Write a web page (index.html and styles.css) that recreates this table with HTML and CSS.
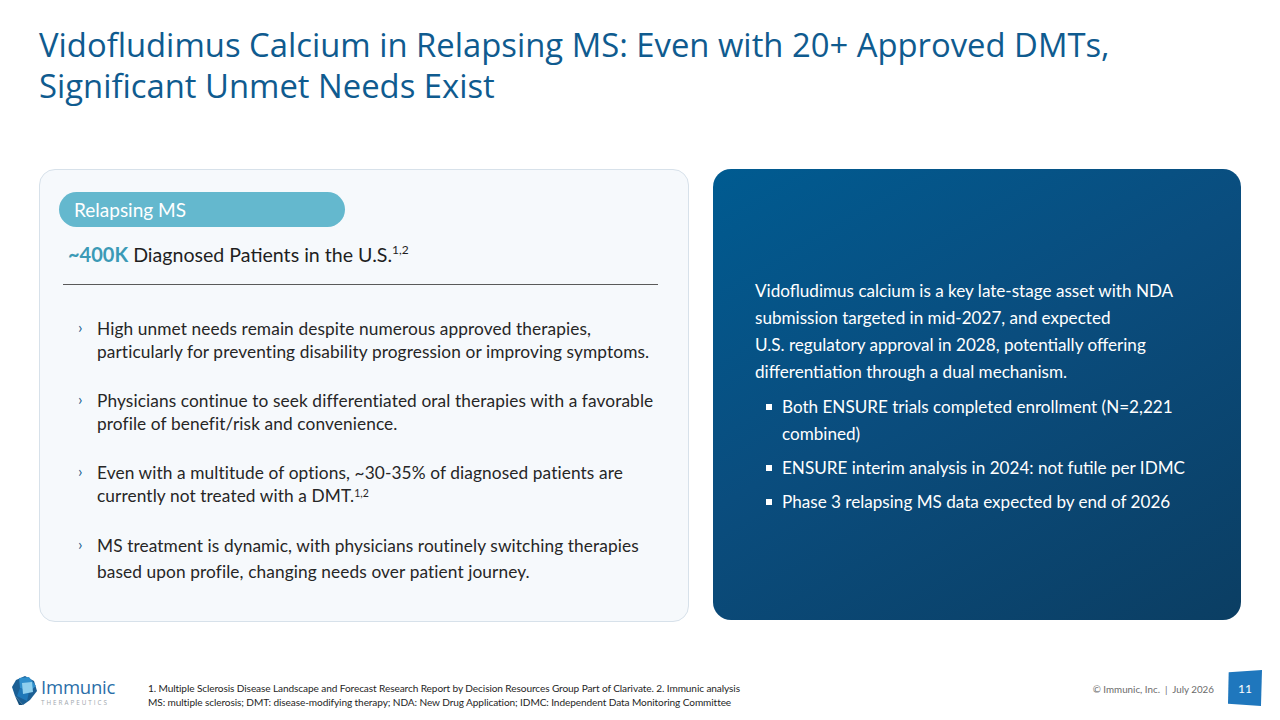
FILE: index.html
```html
<!DOCTYPE html>
<html>
<head>
<meta charset="utf-8">
<link rel="stylesheet" href="styles.css">
</head>
<body>
<div class="slide">
  <h1 class="title">Vidofludimus Calcium in Relapsing MS: Even with 20+ Approved DMTs,<br>Significant Unmet Needs Exist</h1>

  <div class="content">
    <div class="card-left">
      <div class="pill">Relapsing MS</div>
      <div class="stat"><span class="stat-num">~400K</span> Diagnosed Patients in the U.S.<sup>1,2</sup></div>
      <div class="rule"></div>
      <ul class="chev-list">
        <li>High unmet needs remain despite numerous approved therapies, particularly for preventing disability progression or improving symptoms.</li>
        <li>Physicians continue to seek differentiated oral therapies with a favorable profile of benefit/risk and convenience.</li>
        <li>Even with a multitude of options, ~30-35% of diagnosed patients are currently not treated with a DMT.<sup>1,2</sup></li>
        <li class="loose">MS treatment is dynamic, with physicians routinely switching therapies based upon profile, changing needs over patient journey.</li>
      </ul>
    </div>

    <div class="card-right">
      <div class="right-inner">
        <p class="lead">Vidofludimus calcium is a key late-stage asset with NDA submission targeted in mid-2027, and expected<br>U.S. regulatory approval in 2028, potentially offering differentiation through a dual mechanism.</p>
        <ul class="sq-list">
          <li>Both ENSURE trials completed enrollment (N=2,221 combined)</li>
          <li>ENSURE interim analysis in 2024: not futile per IDMC</li>
          <li>Phase 3 relapsing MS data expected by end of 2026</li>
        </ul>
      </div>
    </div>
  </div>

  <div class="footer">
    <div class="logo">
      <svg class="logo-mark" width="26" height="30" viewBox="0 0 26 30">
        <polygon points="4,4 13,0 22,5 25,15 18,24 11,29 3,20 0,11" fill="#1b5f94"/>
        <polygon points="7,2 17,1 24,10 17,16 8,12" fill="#2f8fcc"/>
        <polygon points="8,12 17,16 15,25 5,20" fill="#1f78b8"/>
        <polygon points="10,7 20,6 21,16 11,18" fill="#8fd0ee"/>
        <polygon points="3,20 11,29 7,29" fill="#144f7c"/>
      </svg>
      <div class="logo-text">
        <div class="logo-name">Immunic</div>
        <div class="logo-sub">THERAPEUTICS</div>
      </div>
    </div>
    <div class="footnotes">
      <div>1. Multiple Sclerosis Disease Landscape and Forecast Research Report by Decision Resources Group Part of Clarivate. 2. Immunic analysis</div>
      <div>MS: multiple sclerosis; DMT: disease-modifying therapy; NDA: New Drug Application; IDMC: Independent Data Monitoring Committee</div>
    </div>
    <div class="copyright">© Immunic, Inc. &nbsp;|&nbsp; July 2026</div>
    <div class="page-badge">11</div>
  </div>
</div>
</body>
</html>
```
FILE: styles.css
```css
* { box-sizing: border-box; }
html, body { margin: 0; padding: 0; }
body {
  width: 1280px;
  height: 720px;
  background: #ffffff;
  font-family: "Lato", "Open Sans", sans-serif;
  overflow: hidden;
}
.slide {
  width: 1280px;
  height: 720px;
  display: flex;
  flex-direction: column;
}
.title {
  margin: 24px 0 0 39px;
  font-family: "Open Sans", sans-serif;
  font-weight: 400;
  font-size: 32.8px;
  line-height: 41px;
  color: #0f5b8f;
  letter-spacing: 0;
}
.content {
  display: flex;
  margin: 63px 0 0 39px;
  gap: 24px;
  height: 453px;
}
.card-left {
  width: 650px;
  height: 453px;
  background: #f6f9fc;
  border: 1px solid #d7e1ea;
  border-radius: 16px;
  padding: 22px 31px 0 19px;
}
.pill {
  width: 286px;
  height: 35px;
  border-radius: 18px;
  background: #64b8ce;
  color: #fff;
  font-size: 19px;
  line-height: 35px;
  padding-left: 15px;
}
.stat {
  margin: 14px 0 0 9px;
  font-size: 19.6px;
  color: #1f1f1f;
  line-height: 27px;
}
.stat-num {
  color: #3b9ab6;
  font-weight: 700;
  font-size: 20px;
}
.stat sup {
  font-size: 12px;
  line-height: 0;
}
.chev-list sup {
  font-size: 10.5px;
  line-height: 0;
  vertical-align: 5px;
}
.rule {
  margin: 16px 0 0 4px;
  height: 1px;
  background: #5a5a5a;
  width: 595px;
}
.chev-list {
  list-style: none;
  margin: 32px 0 0 0;
  padding: 0 0 0 38px;
  font-size: 17.3px;
  line-height: 23px;
  color: #262626;
  letter-spacing: 0.1px;
}
.chev-list li {
  position: relative;
  margin-bottom: 26px;
  width: 562px;
}
.chev-list li::before {
  content: "›";
  position: absolute;
  left: -19px;
  top: -2px;
  color: #1a5f8f;
  font-size: 16px;
}
.chev-list li.loose { line-height: 26px; }
.card-right {
  width: 528px;
  height: 451px;
  border-radius: 18px;
  background: linear-gradient(150deg, #005b91 0%, #0a4d7e 45%, #0b3e63 100%);
  display: flex;
  align-items: center;
  padding: 0 40px 0 42px;
}
.right-inner {
  color: #ffffff;
  font-size: 17.1px;
  margin-top: 10px;
}
.lead {
  margin: 0;
  line-height: 27px;
}
.sq-list {
  list-style: none;
  margin: 8px 0 0 0;
  padding: 0 0 0 27px;
  line-height: 27px;
}
.sq-list li {
  position: relative;
  margin-bottom: 7px;
}
.sq-list li::before {
  content: "";
  position: absolute;
  left: -16px;
  top: 11px;
  width: 6px;
  height: 6px;
  background: #ffffff;
}
.footer {
  margin-top: auto;
  height: 50px;
  display: flex;
  align-items: center;
  padding: 0 18px 8px 12px;
}
.logo {
  display: flex;
  align-items: center;
  gap: 3px;
  width: 136px;
}
.logo-text { display: flex; flex-direction: column; }
.logo-name {
  font-family: "Open Sans", sans-serif;
  font-size: 18.5px;
  line-height: 22px;
  color: #2a6ea8;
  letter-spacing: -0.2px;
}
.logo-sub {
  font-family: "Open Sans", sans-serif;
  font-size: 6.3px;
  letter-spacing: 2px;
  color: #a0a6ad;
  line-height: 9px;
}
.footnotes {
  font-size: 10.1px;
  line-height: 14px;
  color: #1f1f1f;
  letter-spacing: -0.1px;
  margin-top: 8px;
}
.copyright {
  margin-left: auto;
  font-size: 9.8px;
  color: #6b6b6b;
  margin-right: 14px;
  margin-top: -4px;
}
.page-badge {
  width: 34px;
  height: 36px;
  background: #1f77bd;
  color: #fff;
  font-size: 12px;
  display: flex;
  align-items: center;
  justify-content: center;
  clip-path: polygon(2% 6%, 100% 0%, 97% 100%, 0% 94%);
  margin-top: -6px;
}
```
